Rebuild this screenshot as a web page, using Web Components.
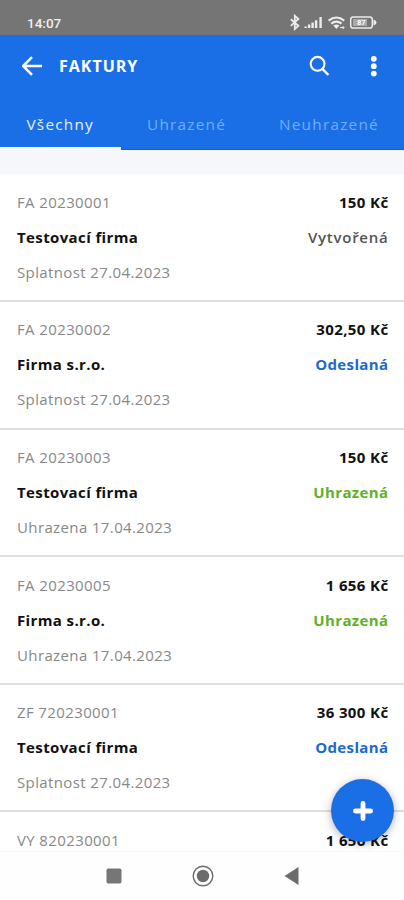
<!DOCTYPE html>
<html lang="cs">
<head>
<meta charset="utf-8">
<meta name="viewport" content="width=device-width, initial-scale=1">
<title>Faktury</title>
<style>
  body {
    --primary: #1a6fe6;
    --green: #5fb224;
    --link: #1b69cf;
    margin: 0;
    height: 900px;
    overflow: hidden;
    font-family: "Open Sans", "Noto Sans", sans-serif;
    background: #fff;
  }
</style>
</head>
<body>
<invoice-app></invoice-app>

<script>
class StatusBar extends HTMLElement {
  constructor() {
    super();
    this.attachShadow({ mode: "open" });
  }

  static get styles() {
    return /* css */`
      :host {
        display: flex;
        flex: none;
        box-sizing: border-box;
        height: 35px;
        padding: 10px 27px 0;
        justify-content: space-between;
        background: #757575;
        color: #f0f0f0;
      }

      .time {
        font: 500 13.5px/26px Roboto, sans-serif;
        letter-spacing: 0;
      }

      svg {
        display: block;
        width: 88px;
        height: 18px;
        margin-top: 4px;
      }

      .level {
        font: 700 7.5px Roboto, sans-serif;
      }
    `;
  }

  connectedCallback() {
    this.shadowRoot.innerHTML = /* html */`
    <style>${StatusBar.styles}</style>
    <span class="time">14:07</span>
    <svg viewBox="289 14 88 18" fill="none" stroke="#ececec">
      <path d="M290.8 19.2l7.6 6.6-3.6 3.2V15.8l3.6 3.2-7.6 6.8" stroke-width="1.8"/>
      <path d="M305.6 28v-1.6M309.1 28v-3.4M312.6 28v-5.4M316.1 28v-7.8M320.6 28V17" stroke-width="2.4"/>
      <path d="M328.6 20.6q7.8-6.2 15.6 0M331.2 23.6q5.2-4 10.4 0" stroke-width="2.1"/>
      <path d="M333.3 25.4q3.1-2 6.2 0l-3.1 3.6z" fill="#ececec" stroke="none"/>
      <path d="M340 27.6h4M342.6 26l1.6 1.6-1.6 1.6" stroke-width="1"/>
      <rect x="350.7" y="16.9" width="21.6" height="11.2" rx="2.6" stroke-width="1.5"/>
      <path d="M373.5 19.5q3 1 3 3t-3 3z" fill="#ececec" stroke="none"/>
      <rect x="353" y="19" width="14" height="7" fill="#a9a9a9" stroke="none"/>
      <text class="level" x="357" y="25.3" fill="#fff" stroke="none">87</text>
    </svg>`;
  }
}

class AppHeader extends HTMLElement {
  constructor() {
    super();
    this.attachShadow({ mode: "open" });
  }

  static get styles() {
    return /* css */`
      :host {
        display: flex;
        flex: none;
        align-items: center;
        box-sizing: border-box;
        height: 63px;
        padding: 0 20px 1px 21px;
        background: var(--primary);
        color: #fff;
      }

      h1 {
        flex: 1;
        margin: 0 0 0 16px;
        font-size: 16px;
        line-height: 22px;
        font-weight: 700;
        letter-spacing: 1px;
      }

      svg {
        display: block;
        fill: none;
        stroke: #fff;
      }

      .search {
        margin-right: 34px;
      }
    `;
  }

  connectedCallback() {
    this.shadowRoot.innerHTML = /* html */`
    <style>${AppHeader.styles}</style>
    <svg width="22" height="22" viewBox="0 0 22 22" stroke-width="2.5" stroke-linejoin="round">
      <path d="M21 11H2.5M11 2.2L2.2 11l8.8 8.8"/>
    </svg>
    <h1><slot></slot></h1>
    <svg class="search" width="22" height="22" viewBox="0 0 22 22" stroke-width="2.1">
      <circle cx="9.6" cy="8.8" r="6.9"/>
      <path d="M14.4 13.8l6 6.2" stroke-width="2.4"/>
    </svg>
    <svg width="20" height="22" viewBox="0 0 20 22">
      <g fill="#fff" stroke="none">
        <circle cx="9.8" cy="3.8" r="2.9"/>
        <circle cx="9.8" cy="11.2" r="2.9"/>
        <circle cx="9.8" cy="18.6" r="2.9"/>
      </g>
    </svg>`;
  }
}

class TabBar extends HTMLElement {
  constructor() {
    super();
    this.attachShadow({ mode: "open" });
  }

  static get styles() {
    return /* css */`
      :host {
        display: flex;
        flex: none;
        height: 52px;
        background: var(--primary);
        box-shadow: inset 0 -1px #1061d0;
      }
    `;
  }

  connectedCallback() {
    this.shadowRoot.innerHTML = /* html */`
    <style>${TabBar.styles}</style>
    <slot></slot>`;
  }
}

class TabItem extends HTMLElement {
  constructor() {
    super();
    this.attachShadow({ mode: "open" });
  }

  static get styles() {
    return /* css */`
      :host {
        display: block;
        box-sizing: border-box;
        height: 52px;
        padding: 15px 0 0 26px;
        color: #75adf4;
        font-size: 15.3px;
        line-height: 22px;
        font-weight: 500;
        letter-spacing: 1.25px;
        white-space: nowrap;
      }

      :host([active]) {
        width: 121px;
        padding-left: 26.5px;
        color: #e6f1ff;
        border-bottom: 3px solid #f4f8fd;
      }
    `;
  }

  connectedCallback() {
    this.shadowRoot.innerHTML = /* html */`
    <style>${TabItem.styles}</style>
    <slot></slot>`;
  }
}

class InvoiceRow extends HTMLElement {
  constructor() {
    super();
    this.attachShadow({ mode: "open" });
  }

  static get styles() {
    return /* css */`
      :host {
        display: grid;
        flex: none;
        grid-template-columns: auto auto;
        grid-template-rows: 35px 35px 35px;
        justify-content: space-between;
        box-sizing: border-box;
        height: 127.6px;
        padding: 10.5px 15.5px 0 17px;
        border-bottom: 2px solid #dedede;
        background: #fff;
        color: #111;
        font-size: 15px;
        line-height: 35px;
        letter-spacing: 0.38px;
        white-space: nowrap;
      }

      .number, .date {
        color: #888;
      }

      .amount, .status {
        text-align: right;
        font-weight: 600;
      }

      .amount, .name {
        font-weight: 700;
      }

      .status {
        color: #555;
      }

      :host([state="created"]) .status {
        letter-spacing: 0.75px;
      }

      :host([state="sent"]) .status {
        color: var(--link);
        font-weight: 700;
      }

      :host([state="paid"]) .status {
        color: var(--green);
        font-weight: 700;
      }
    `;
  }

  connectedCallback() {
    const get = (name) => this.getAttribute(name) || "";
    this.shadowRoot.innerHTML = /* html */`
    <style>${InvoiceRow.styles}</style>
    <span class="number">${get("number")}</span>
    <span class="amount">${get("amount")}</span>
    <span class="name">${get("name")}</span>
    <span class="status">${get("status")}</span>
    <span class="date">${get("date")}</span>`;
  }
}

class AddButton extends HTMLElement {
  constructor() {
    super();
    this.attachShadow({ mode: "open" });
  }

  static get styles() {
    return /* css */`
      :host {
        position: absolute;
        right: 10px;
        bottom: 58px;
        display: flex;
        align-items: center;
        justify-content: center;
        width: 63px;
        height: 63px;
        border-radius: 50%;
        background: var(--primary);
        box-shadow: 0 2px 9px rgba(0, 0, 0, 0.3);
      }
    `;
  }

  connectedCallback() {
    this.shadowRoot.innerHTML = /* html */`
    <style>${AddButton.styles}</style>
    <svg width="20" height="20" viewBox="0 0 20 20" stroke="#fff" stroke-width="4.8" stroke-linecap="round">
      <path d="M10 2.4v15.2M2.4 10h15.2"/>
    </svg>`;
  }
}

class NavigationBar extends HTMLElement {
  constructor() {
    super();
    this.attachShadow({ mode: "open" });
  }

  static get styles() {
    return /* css */`
      :host {
        display: flex;
        flex: none;
        box-sizing: border-box;
        height: 49px;
        padding: 13px 0 0 1px;
        justify-content: center;
        gap: 67px;
        background: #fefefe;
        border-top: 1px solid #f8f8f8;
      }

      svg {
        display: block;
        width: 22px;
        height: 22px;
      }
    `;
  }

  connectedCallback() {
    this.shadowRoot.innerHTML = /* html */`
    <style>${NavigationBar.styles}</style>
    <svg viewBox="0 0 22 22" fill="#767676"><rect x="3.5" y="3.5" width="15" height="15" rx="1.8"/></svg>
    <svg viewBox="0 0 22 22" fill="#6c6c6c">
      <circle cx="11" cy="11" r="9.8" fill="none" stroke="#6c6c6c" stroke-width="1.4"/>
      <circle cx="11" cy="11" r="6.2"/>
    </svg>
    <svg viewBox="0 0 22 22" fill="#6c6c6c"><path d="M17.5 2v18L3.5 11z"/></svg>`;
  }
}

class InvoiceApp extends HTMLElement {
  constructor() {
    super();
    this.attachShadow({ mode: "open" });
    this.invoices = [
      { number: "FA 20230001", amount: "150 Kč", name: "Testovací firma", status: "Vytvořená", date: "Splatnost 27.04.2023", state: "created" },
      { number: "FA 20230002", amount: "302,50 Kč", name: "Firma s.r.o.", status: "Odeslaná", date: "Splatnost 27.04.2023", state: "sent" },
      { number: "FA 20230003", amount: "150 Kč", name: "Testovací firma", status: "Uhrazená", date: "Uhrazena 17.04.2023", state: "paid" },
      { number: "FA 20230005", amount: "1 656 Kč", name: "Firma s.r.o.", status: "Uhrazená", date: "Uhrazena 17.04.2023", state: "paid" },
      { number: "ZF 720230001", amount: "36 300 Kč", name: "Testovací firma", status: "Odeslaná", date: "Splatnost 27.04.2023", state: "sent" },
      { number: "VY 820230001", amount: "1 656 Kč" },
    ];
  }

  static get styles() {
    return /* css */`
      :host {
        position: relative;
        display: flex;
        flex-direction: column;
        width: 404px;
        height: 900px;
      }

      .list {
        display: flex;
        flex-direction: column;
        flex: 1;
        min-height: 0;
        overflow: hidden;
        padding-top: 24.4px;
        background: #f5f7fb;
      }
    `;
  }

  connectedCallback() {
    const rows = this.invoices.map((invoice) => {
      const attrs = Object.entries(invoice).map(([key, value]) => `${key}="${value}"`);
      return `<invoice-row ${attrs.join(" ")}></invoice-row>`;
    });
    this.shadowRoot.innerHTML = /* html */`
    <style>${InvoiceApp.styles}</style>
    <status-bar></status-bar>
    <app-header>FAKTURY</app-header>
    <tab-bar>
      <tab-item active>Všechny</tab-item>
      <tab-item>Uhrazené</tab-item>
      <tab-item style="padding-left: 53px">Neuhrazené</tab-item>
    </tab-bar>
    <div class="list">${rows.join("")}</div>
    <navigation-bar></navigation-bar>
    <add-button></add-button>`;
  }
}

customElements.define("status-bar", StatusBar);
customElements.define("app-header", AppHeader);
customElements.define("tab-bar", TabBar);
customElements.define("tab-item", TabItem);
customElements.define("invoice-row", InvoiceRow);
customElements.define("add-button", AddButton);
customElements.define("navigation-bar", NavigationBar);
customElements.define("invoice-app", InvoiceApp);
</script>
</body>
</html>
